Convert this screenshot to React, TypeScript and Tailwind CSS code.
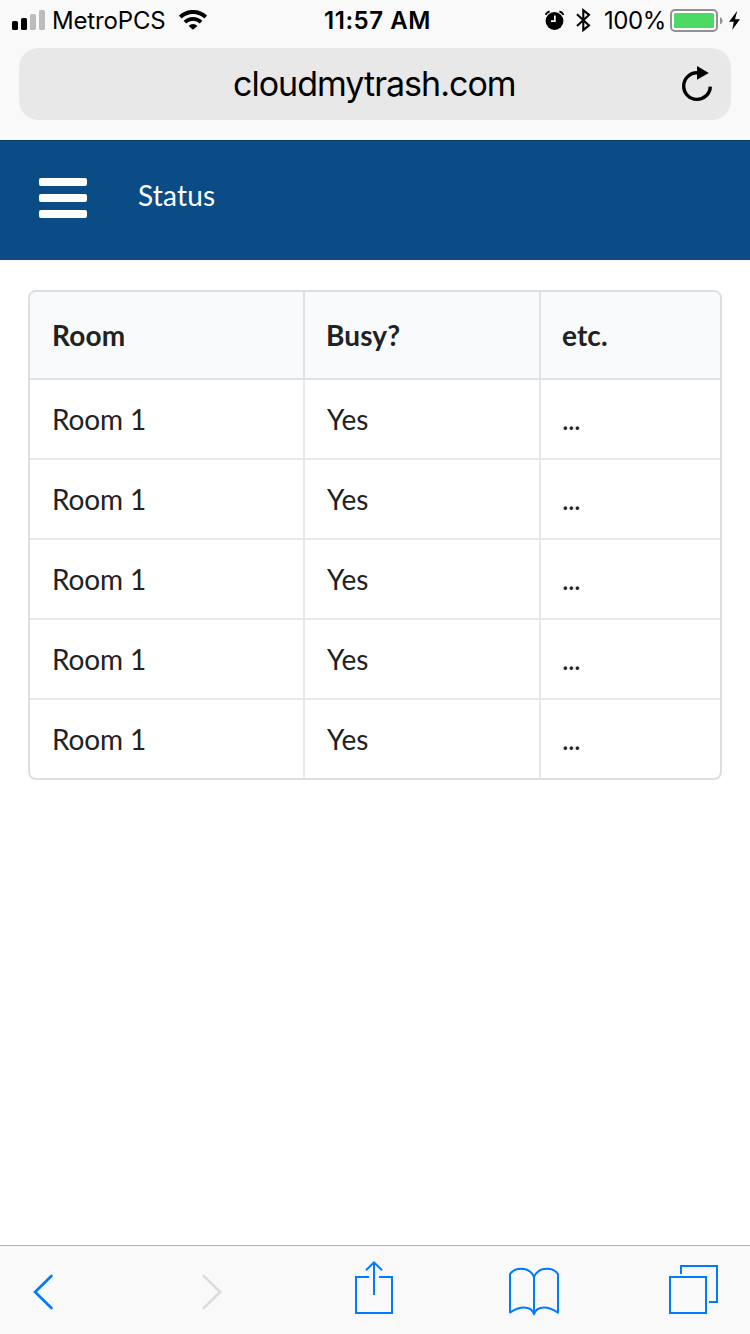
import React from "react";

const rows = [1, 2, 3, 4, 5].map((id) => ({ id, room: "Room 1", busy: "Yes", etc: "..." }));

function StatusBar() {
  return (
    <div className="flex h-12 items-start text-[24px] leading-[42px] text-black">
      <div className="flex w-[324px] items-start pl-3">
        <svg width="33" height="20" viewBox="0 0 33 20" className="mt-[10px]">
          <rect x="0" y="11" width="6" height="9" rx="1.6" />
          <rect x="9" y="8" width="6" height="12" rx="1.6" />
          <rect x="18" y="4" width="6" height="16" rx="1.6" fill="#bcbcbc" />
          <rect x="27" y="0" width="6" height="20" rx="1.6" fill="#bcbcbc" />
        </svg>
        <span className="ml-[7px] w-[120px] whitespace-nowrap tracking-[-0.15px]">MetroPCS</span>
        <svg width="28" height="20" viewBox="0 0 28 20" className="ml-[7px] mt-[10px]" fill="none" stroke="#000">
          <path d="M1.3 7.1a18.2 18.2 0 0 1 25.4 0" strokeWidth="4" />
          <path d="M5.9 12.2a11.7 11.7 0 0 1 16.2 0" strokeWidth="3.8" />
          <path d="M14 19.8 9.6 15.9a6.3 6.3 0 0 1 8.8 0Z" fill="#000" stroke="none" />
        </svg>
      </div>
      <span className="w-[120px] whitespace-nowrap font-semibold tracking-[0.55px]">11:57 AM</span>
      <div className="flex flex-1 items-start">
        <svg width="20" height="20" viewBox="0 0 20 20" className="ml-[101px] mt-[10px]">
          <circle cx="9.5" cy="11" r="8.9" />
          <path d="M.5 4.8A6 6 0 0 1 4.6 1.5M18.5 4.8A6 6 0 0 0 14.4 1.5" fill="none" stroke="#000" strokeWidth="1.8" />
          <path d="M9.9 5.5v5.7H6" fill="none" stroke="#f9f9f9" strokeWidth="1.7" />
        </svg>
        <svg width="15" height="24" viewBox="0 0 15 24" className="ml-[11px] mt-2" fill="none" stroke="#000" strokeWidth="2.1">
          <path d="M1 6.3 13 17.4 7.3 22.1V2.3L13 6.9 1 18" />
        </svg>
        <span className="ml-[13px] w-[61px] whitespace-nowrap tracking-[-0.4px]">100%</span>
        <svg width="71" height="24" viewBox="0 0 71 24" className="ml-[5px] mt-[9px]">
          <rect x="1" y="1" width="46" height="21" rx="4" fill="#fff" stroke="#929292" strokeWidth="2" />
          <rect x="4" y="4" width="40" height="15" rx="1.5" fill="#4cd964" />
          <path d="M50 8a4 4 0 0 1 0 7.5Z" fill="#929292" />
          <path d="M67.3 1.7 59 12.7h4.8L62.2 21 70 10.3h-5Z" />
        </svg>
      </div>
    </div>
  );
}

function AddressBar() {
  return (
    <div className="mx-[19px] flex h-[72px] items-center rounded-[20px] bg-[#e8e8e8]">
      <span className="ml-[214px] w-[284px] whitespace-nowrap text-[34px] leading-[72px] tracking-[-0.98px] text-black">
        cloudmytrash.com
      </span>
      <svg width="32" height="38" viewBox="0 0 32 38" className="ml-[164px]">
        <path d="M29.3 21.6a13.3 13.3 0 1 1-13.3-13.8" fill="none" stroke="#000" strokeWidth="3.4" />
        <path d="m16 1 11.8 6.9L16 14.7Z" />
      </svg>
    </div>
  );
}

function Toolbar() {
  return (
    <nav className="flex h-[89px] items-start border-t border-[#b2b2b2] bg-[#f9f9f9]">
      <svg width="22" height="36" viewBox="0 0 22 36" className="ml-8 mt-7" fill="none" stroke="#007aff" strokeWidth="2.7" strokeLinecap="round">
        <path d="M19.4 2 3.1 18l16.3 16" />
      </svg>
      <svg width="22" height="36" viewBox="0 0 22 36" className="ml-[147px] mt-7" fill="none" stroke="#dcdcdc" strokeWidth="2.7" strokeLinecap="round">
        <path d="m2.8 2 16.3 16L2.8 34" />
      </svg>
      <svg width="38" height="54" viewBox="0 0 38 54" className="ml-[132px] mt-[15px]" fill="none" stroke="#007aff" strokeWidth="2">
        <path d="M14 16H1v36h36V16H24M19 34V1.5M11 9.2 19 1.4l8 7.8" />
      </svg>
      <svg width="52" height="50" viewBox="0 0 52 50" className="ml-[115px] mt-[21px]" fill="none" stroke="#007aff" strokeWidth="2">
        <path d="M26 10C23.5 4 18.5 1.7 13 1.7 8 1.7 4.5 3.5 2 7v38.6C6.5 42.5 11 40.6 16 40.6c4.5 0 8.5 2 10 6.7 1.500-4.700 5.500-6.700 10-6.700 5 0 9.500 2.100 14 5V7c-2.500-3.500-6-5.300-11-5.300C33.500 1.700 28.500 4 26 10v37.300" strokeLinejoin="round" />
      </svg>
      <svg width="50" height="50" viewBox="0 0 50 50" className="ml-[109px] mt-[18px]" fill="none" stroke="#007aff" strokeWidth="2">
        <path d="M1 13h36v36H1ZM12 10V2h36v36h-8" />
      </svg>
    </nav>
  );
}

export default function App() {
  return (
    <div className="flex h-[1334px] w-[750px] flex-col overflow-hidden bg-white font-['Inter','Liberation_Sans',sans-serif]">
      <header className="h-[140px] shrink-0 bg-[#f9f9f9]">
        <StatusBar />
        <AddressBar />
      </header>
      <div className="flex h-[120px] shrink-0 items-start border-t border-[#0a3d6c] bg-[#0b4c86] pl-[39px] font-['Lato',sans-serif]">
        <div className="mt-[37px] flex w-12 flex-col gap-2">
          <span className="h-2 rounded-[2px] bg-white" />
          <span className="h-2 rounded-[2px] bg-white" />
          <span className="h-2 rounded-[2px] bg-white" />
        </div>
        <span className="ml-[51px] mt-[34px] text-[28px] leading-[40px] tracking-[0.2px] text-white">Status</span>
      </div>
      <main className="flex-1 px-7 pt-[30px] font-['Lato',sans-serif] text-[28px] leading-[36px] text-[#212223]">
        <div className="overflow-hidden rounded-lg border-2 border-[#dededf]">
          <table className="w-full table-fixed border-separate border-spacing-0 text-left">
            <colgroup>
              <col className="w-[273px]" />
              <col className="w-[236px]" />
              <col className="w-[181px]" />
            </colgroup>
            <thead>
              <tr className="h-[88px] bg-[#f9fafb]">
                <th className="border-b-2 border-[#e1e2e3] px-[22px] py-0 font-bold tracking-[0.15px]">Room</th>
                <th className="border-b-2 border-l-2 border-[#e1e2e3] py-0 pl-[21px] font-bold tracking-[0.1px]">Busy?</th>
                <th className="border-b-2 border-l-2 border-[#e1e2e3] py-0 pl-[21px] font-bold tracking-[0.1px]">etc.</th>
              </tr>
            </thead>
            <tbody className="[&>tr:last-child]:h-[78px] [&>tr:last-child>td]:border-b-0">
              {rows.map((row) => (
                <tr key={row.id} className="h-20">
                  <td className="border-b-2 border-[#e8e8e9] px-[22px] py-0 tracking-[-0.1px]">{row.room}</td>
                  <td className="border-b-2 border-l-2 border-[#e8e8e9] py-0 pl-[22px]">{row.busy}</td>
                  <td className="border-b-2 border-l-2 border-[#e8e8e9] py-0 pl-[21px] tracking-[-0.6px]">{row.etc}</td>
                </tr>
              ))}
            </tbody>
          </table>
        </div>
      </main>
      <Toolbar />
    </div>
  );
}
